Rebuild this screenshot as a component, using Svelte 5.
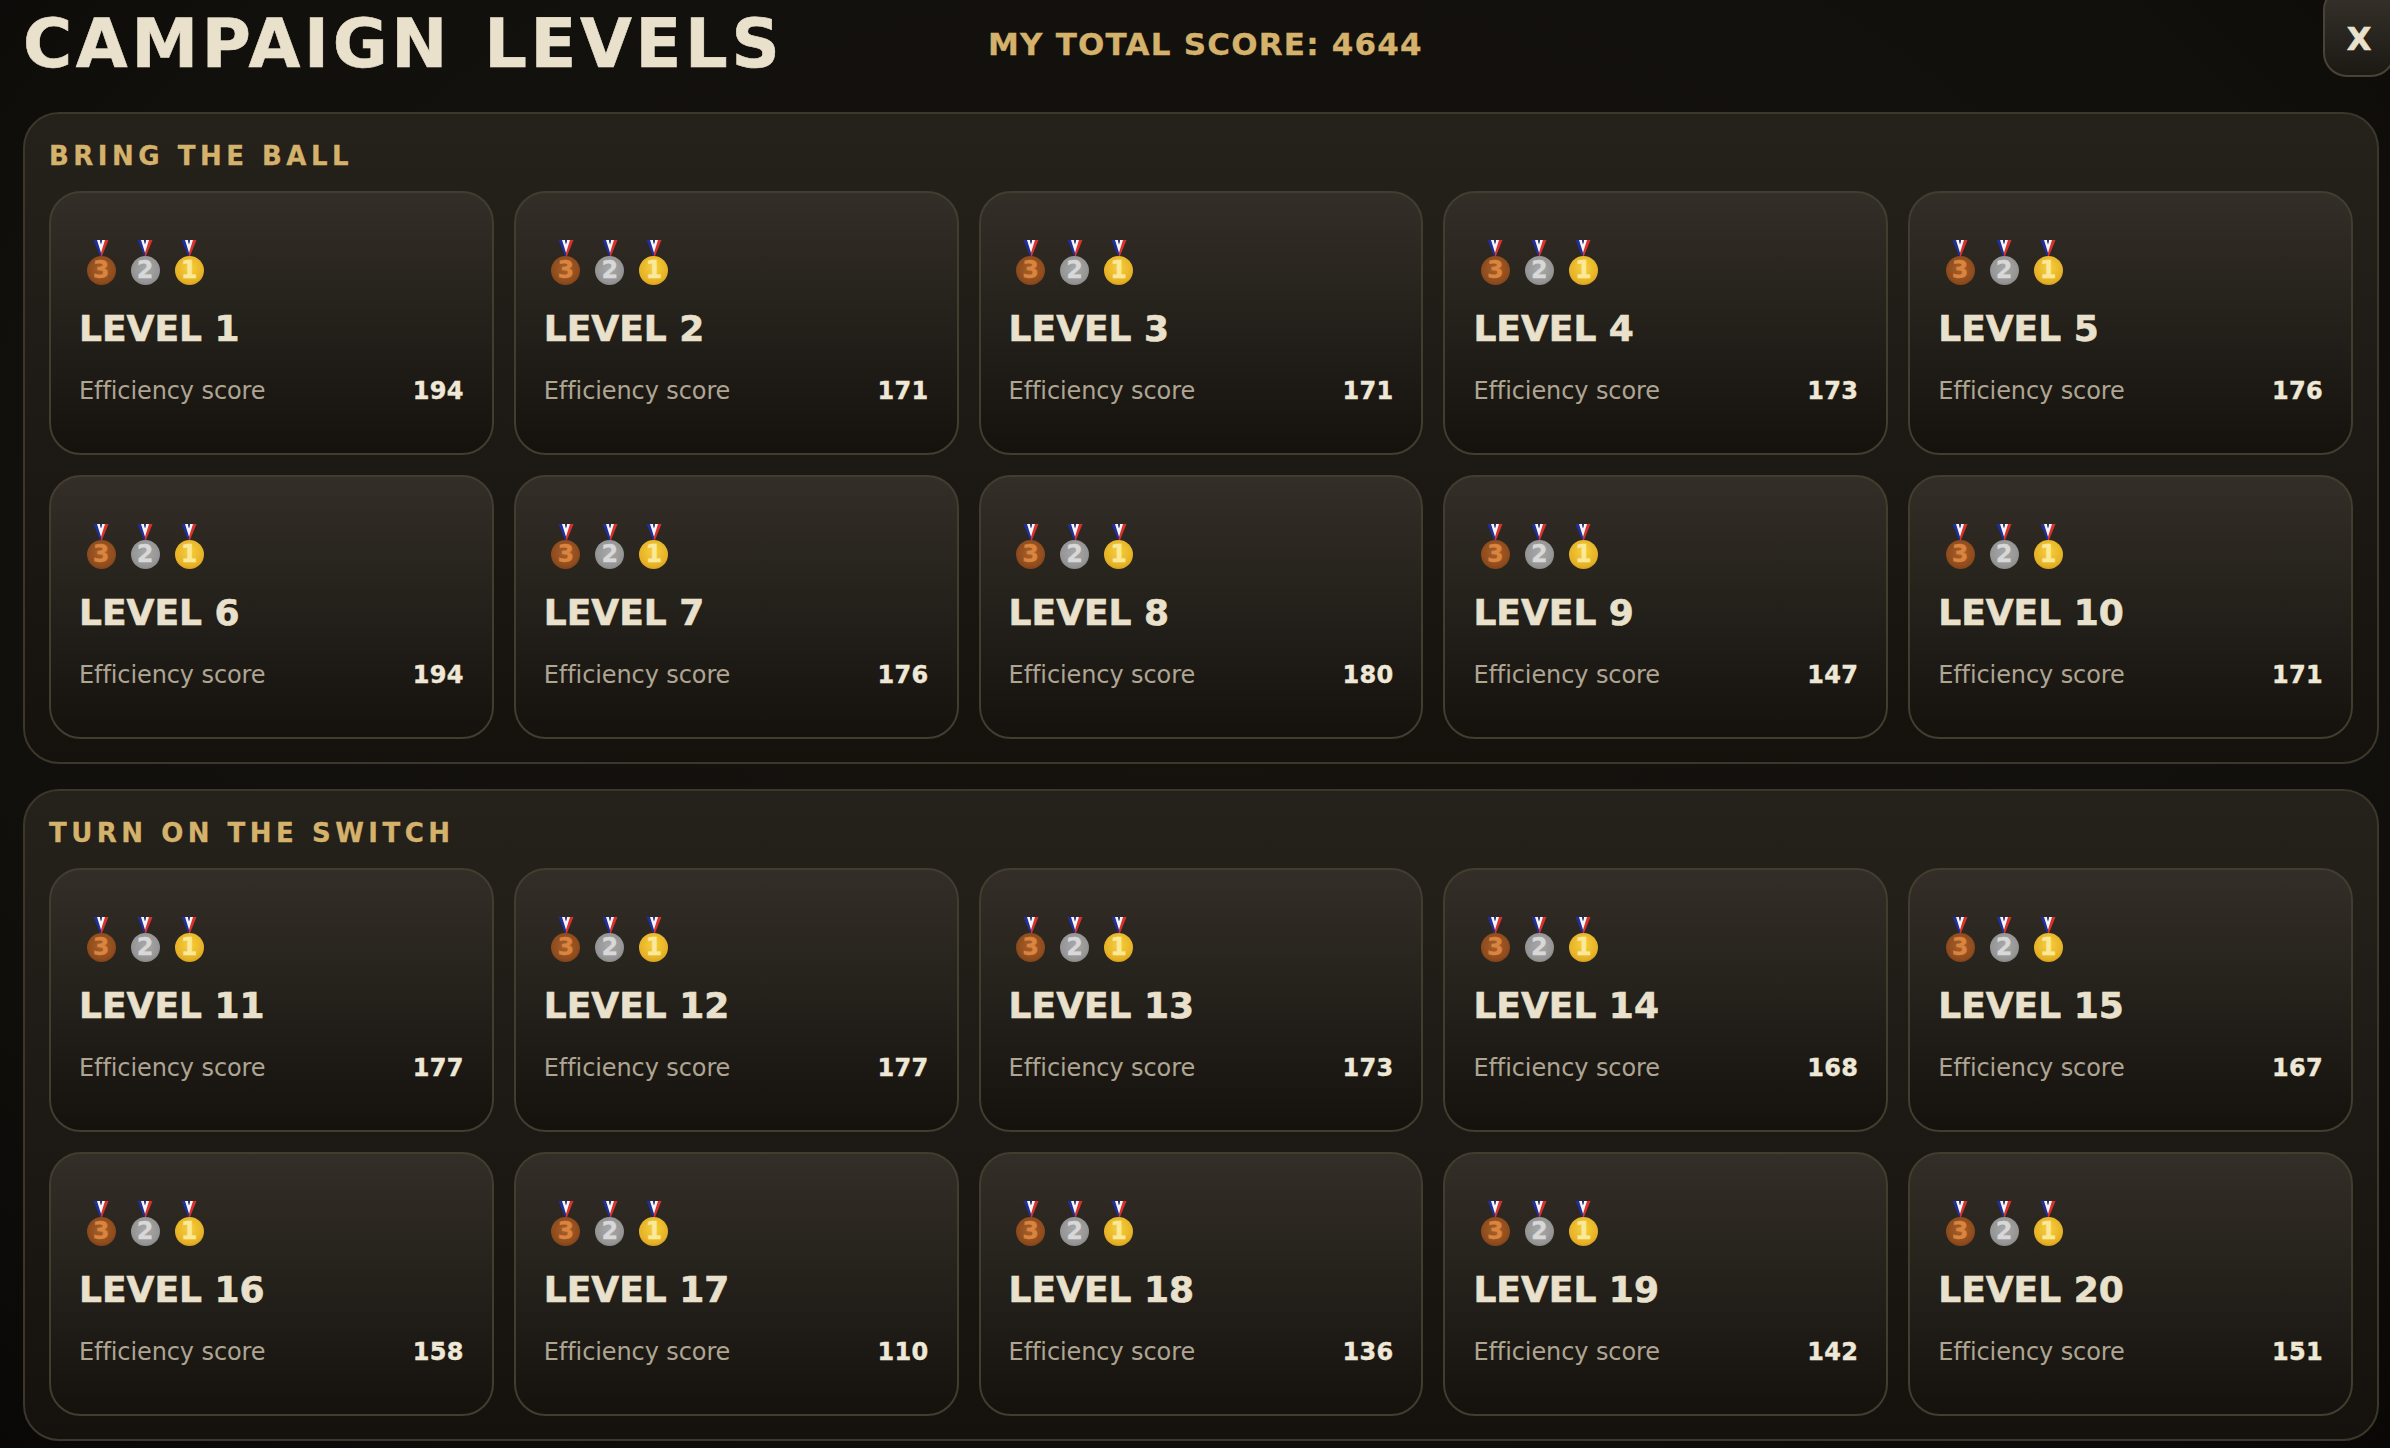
<script>
    const sections = [
        {
            title: 'BRING THE BALL',
            levels: [
                [1, 194], [2, 171], [3, 171], [4, 173], [5, 176],
                [6, 194], [7, 176], [8, 180], [9, 147], [10, 171]
            ]
        },
        {
            title: 'TURN ON THE SWITCH',
            levels: [
                [11, 177], [12, 177], [13, 173], [14, 168], [15, 167],
                [16, 158], [17, 110], [18, 136], [19, 142], [20, 151]
            ]
        }
    ];

    const medals = [
        { kind: 'bronze', digit: 3 },
        { kind: 'silver', digit: 2 },
        { kind: 'gold', digit: 1 }
    ];
</script>

<main class="page">
    <header class="top">
        <h1>CAMPAIGN LEVELS</h1>
        <div class="total">MY TOTAL SCORE: 4644</div>
    </header>
    <button class="close">X</button>

    {#each sections as section}
        <section class="panel">
            <h2>{section.title}</h2>
            <div class="grid">
                {#each section.levels as [num, score]}
                    <div class="card">
                        <div class="medals">
                            {#each medals as m}
                                <div class="medal">
                                    <svg class="ribbon" viewBox="0 0 16 15" width="16" height="16" preserveAspectRatio="none">
                                        <polygon points="0.5,0 4.5,0 8,10 8,15 7,15" fill="#1f2f9c" />
                                        <polygon points="11.5,0 15.5,0 9,15 8,15 8,10" fill="#d9322c" />
                                        <polygon points="4,0 7,0 8,4 9,0 12,0 8,12" fill="#f6f4f4" />
                                        <polygon points="7,0 9,0 8,4" fill="#1f2f9c" />
                                    </svg>
                                    <div class="disk {m.kind}">{m.digit}</div>
                                </div>
                            {/each}
                        </div>
                        <div class="name">LEVEL {num}</div>
                        <div class="row">
                            <span class="label">Efficiency score</span>
                            <span class="score">{score}</span>
                        </div>
                    </div>
                {/each}
            </div>
        </section>
    {/each}
</main>

<style>
    :global(body) {
        margin: 0;
        background: #0b0a08;
    }

    .page {
        position: relative;
        box-sizing: border-box;
        width: 2390px;
        height: 1448px;
        overflow: hidden;
        padding: 0 11px 0 23px;
        display: flex;
        flex-direction: column;
        gap: 25px;
        font-family: "DejaVu Sans", Verdana, sans-serif;
        background: radial-gradient(ellipse at 50% 40%, #16130f 0%, #12100c 70%, #090807 100%);
    }

    .top {
        height: 87px;
        display: flex;
        align-items: center;
    }

    h1 {
        margin: 2px 0 0 0;
        width: 965px;
        font-size: 67px;
        line-height: 85px;
        font-weight: 700;
        letter-spacing: 3.7px;
        word-spacing: 6px;
        color: #e9e1cc;
        -webkit-text-stroke: 0.6px #e9e1cc;
    }

    .total {
        font-size: 31px;
        font-weight: 700;
        letter-spacing: 1.2px;
        color: #d4b26c;
        -webkit-text-stroke: 0.3px #d4b26c;
    }

    .close {
        position: absolute;
        top: -14px;
        right: -5px;
        width: 72px;
        height: 91px;
        box-sizing: border-box;
        border: 2px solid #4a4335;
        border-radius: 24px;
        background: linear-gradient(180deg, #37322b, #1c1915);
        color: #e9e1cc;
        font-family: inherit;
        font-size: 32px;
        font-weight: 700;
        -webkit-text-stroke: 0.6px #e9e1cc;
        padding: 14px 0 0 0;
        text-align: center;
    }

    .panel {
        box-sizing: border-box;
        height: 652px;
        padding: 29px 24px 21px 24px;
        border: 2px solid #3d372b;
        border-radius: 36px;
        background: linear-gradient(180deg, #25211b 0%, #15120e 100%);
    }

    h2 {
        margin: 0 0 22px 0;
        font-size: 26px;
        line-height: 26px;
        font-weight: 700;
        letter-spacing: 4.5px;
        color: #d4b26c;
        -webkit-text-stroke: 0.3px #d4b26c;
    }

    .grid {
        display: grid;
        grid-template-columns: repeat(5, 1fr);
        gap: 20px;
    }

    .card {
        box-sizing: border-box;
        height: 264px;
        padding: 47px 28px 0 28px;
        border: 2px solid #433d30;
        border-radius: 32px;
        background: linear-gradient(180deg, #332e27 0%, #15120e 100%);
    }

    .medals {
        display: flex;
        gap: 14px;
        padding-left: 7px;
        height: 45px;
    }

    .medal {
        width: 30px;
        display: flex;
        flex-direction: column;
        align-items: center;
    }

    .ribbon {
        display: block;
        flex: none;
    }

    .disk {
        flex: none;
        box-sizing: border-box;
        width: 29px;
        height: 29px;
        border-radius: 50%;
        display: flex;
        align-items: center;
        justify-content: center;
        font-size: 24px;
        line-height: 29px;
        font-weight: 700;
        -webkit-text-stroke: 0.3px currentColor;
    }

    .bronze {
        background: radial-gradient(circle at 50% 45%, #a95f2a 0%, #8f4c1d 60%, #6d3510 100%);
        color: #d9843f;
    }

    .silver {
        background: radial-gradient(circle at 50% 45%, #a8a8a8 0%, #969696 60%, #737373 100%);
        color: #d8d8d8;
    }

    .gold {
        background: radial-gradient(circle at 50% 40%, #f6cf3e 0%, #e6b025 65%, #b5820f 100%);
        color: #fbe99a;
    }

    .name {
        margin-top: 22px;
        font-size: 36px;
        line-height: 44px;
        font-weight: 700;
        color: #e9e1cc;
        -webkit-text-stroke: 0.6px #e9e1cc;
    }

    .row {
        margin-top: 24px;
        display: flex;
        justify-content: space-between;
        align-items: center;
        font-size: 24px;
        line-height: 32px;
    }

    .label {
        letter-spacing: -0.1px;
        color: #aea592;
    }

    .score {
        font-weight: 700;
        letter-spacing: 0.3px;
        color: #efe8d6;
        -webkit-text-stroke: 0.4px #efe8d6;
    }
</style>
